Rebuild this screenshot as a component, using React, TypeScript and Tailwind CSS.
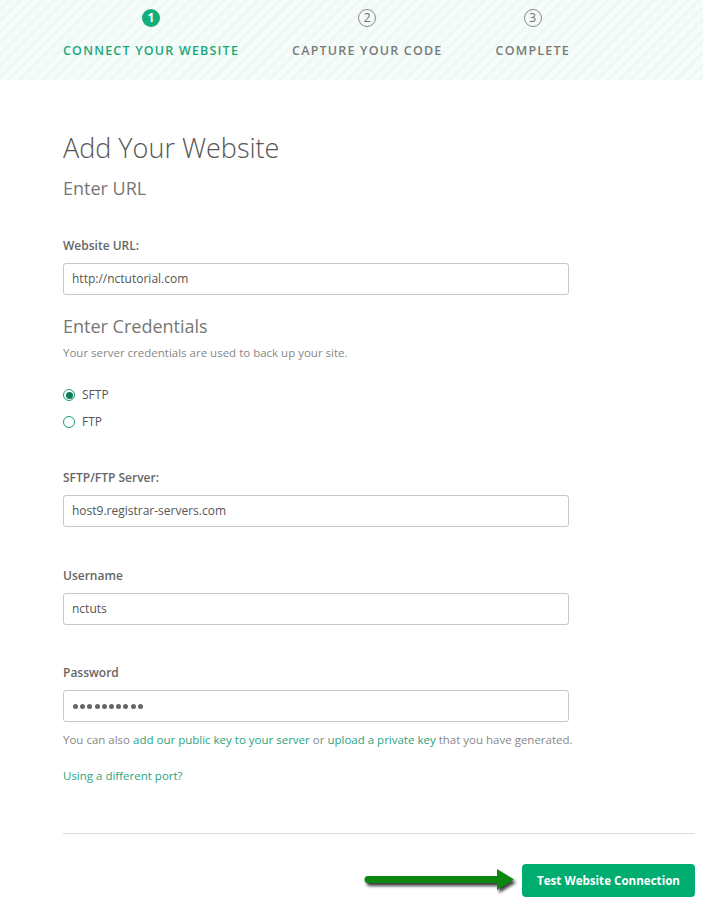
import React from "react";

const font = { fontFamily: '"Open Sans", "Noto Sans", Arial, sans-serif' };

function Step({ n, label, active }: { n: number; label: string; active?: boolean }) {
  return (
    <div className="flex flex-col items-center">
      <div
        className={
          active
            ? "mt-[9px] w-[18px] h-[18px] rounded-full bg-[#12ad78] text-white text-[12px] font-bold flex items-center justify-center leading-none"
            : "mt-[9px] w-[18px] h-[18px] rounded-full border border-[#8a8a8a] text-[#6f6f6f] text-[12px] flex items-center justify-center leading-none"
        }
      >
        {n}
      </div>
      <div
        className={
          "mt-[14px] text-[12.5px] leading-[19px] font-semibold tracking-[1.2px] uppercase " +
          (active ? "text-[#1aa87a]" : "text-[#7a7a7a]")
        }
      >
        {label}
      </div>
    </div>
  );
}

function Field({ label, value, mt }: { label: string; value: React.ReactNode; mt: string }) {
  return (
    <>
      <div className={mt + " text-[12px] leading-[18px] font-semibold text-[#666]"}>{label}</div>
      <div className="mt-[8px] w-[506px] h-[32px] border border-[#c8c8c8] rounded-[3px] px-[8px] flex items-center text-[12px] text-[#555]">
        {value}
      </div>
    </>
  );
}

export default function App() {
  const dots = Array.from({ length: 10 });
  return (
    <div className="w-[703px] h-[900px] bg-white overflow-hidden" style={font}>
      <div className="h-[80px] bg-[repeating-linear-gradient(135deg,#f6fcfa_0px,#f6fcfa_5px,#eef9f5_5px,#eef9f5_8px)] flex pl-[63px] gap-[53px]">
        <Step n={1} label="Connect your website" active />
        <Step n={2} label="Capture your code" />
        <Step n={3} label="Complete" />
      </div>

      <div className="pl-[63px] pr-[8px] flex flex-col">
        <div className="mt-[49px] text-[27px] leading-[38px] font-light text-[#555]">Add Your Website</div>
        <div className="mt-[8px] text-[18px] leading-[26px] text-[#777]">Enter URL</div>

        <Field label="Website URL:" value="http://nctutorial.com" mt="mt-[36px]" />

        <div className="mt-[18px] text-[18px] leading-[26px] text-[#777]">Enter Credentials</div>
        <div className="mt-[5px] text-[11.5px] leading-[18px] text-[#888]">
          Your server credentials are used to back up your site.
        </div>

        <div className="mt-[23px] h-[20px] flex items-center gap-[7px] text-[12px] text-[#555]">
          <span className="w-[12px] h-[12px] rounded-full border-[1.5px] border-[#1b9d6e] flex items-center justify-center">
            <span className="w-[7px] h-[7px] rounded-full bg-[#0d7d55]" />
          </span>
          SFTP
        </div>
        <div className="mt-[7px] h-[20px] flex items-center gap-[7px] text-[12px] text-[#555]">
          <span className="w-[12px] h-[12px] rounded-full border-[1.5px] border-[#1b9d6e]" />
          FTP
        </div>

        <Field label="SFTP/FTP Server:" value="host9.registrar-servers.com" mt="mt-[37px]" />
        <Field label="Username" value="nctuts" mt="mt-[40px]" />
        <Field
          label="Password"
          value={
            <span className="flex gap-[2.2px] pl-[1px]">
              {dots.map((_, i) => (
                <span key={i} className="w-[5px] h-[5px] rounded-full bg-[#666]" />
              ))}
            </span>
          }
          mt="mt-[39px]"
        />

        <div className="mt-[9px] text-[11.5px] leading-[18px] text-[#888]">
          You can also{" "}
          <span className="text-[#2aa37f]">add our public key to your server</span> or{" "}
          <span className="text-[#2aa37f]">upload a private key</span> that you have generated.
        </div>
        <div className="mt-[18px] text-[11.5px] leading-[18px] text-[#2aa37f]">Using a different port?</div>

        <div className="mt-[48px] h-px bg-[#dddddd]" />

        <div className="mt-[30px] flex items-center justify-end">
          <svg width="156" height="32" viewBox="0 0 156 32" className="mr-[3px]">
            <defs>
              <filter id="sh" x="-10%" y="-50%" width="120%" height="200%">
                <feGaussianBlur stdDeviation="1.4" />
              </filter>
            </defs>
            <g transform="translate(2,3)" filter="url(#sh)" fill="#111" opacity="0.8">
              <path d="M5 11 H134 V4 L151 14.5 L134 25 V18 H5 A3.5 3.5 0 0 1 5 11 Z" />
            </g>
            <path d="M5 11 H134 V4 L151 14.5 L134 25 V18 H5 A3.5 3.5 0 0 1 5 11 Z" fill="#0b860f" />
          </svg>
          <div className="h-[33px] px-[15px] rounded-[4px] bg-[#00ad70] text-white text-[11.6px] font-bold flex items-center">
            Test Website Connection
          </div>
        </div>
      </div>
    </div>
  );
}
